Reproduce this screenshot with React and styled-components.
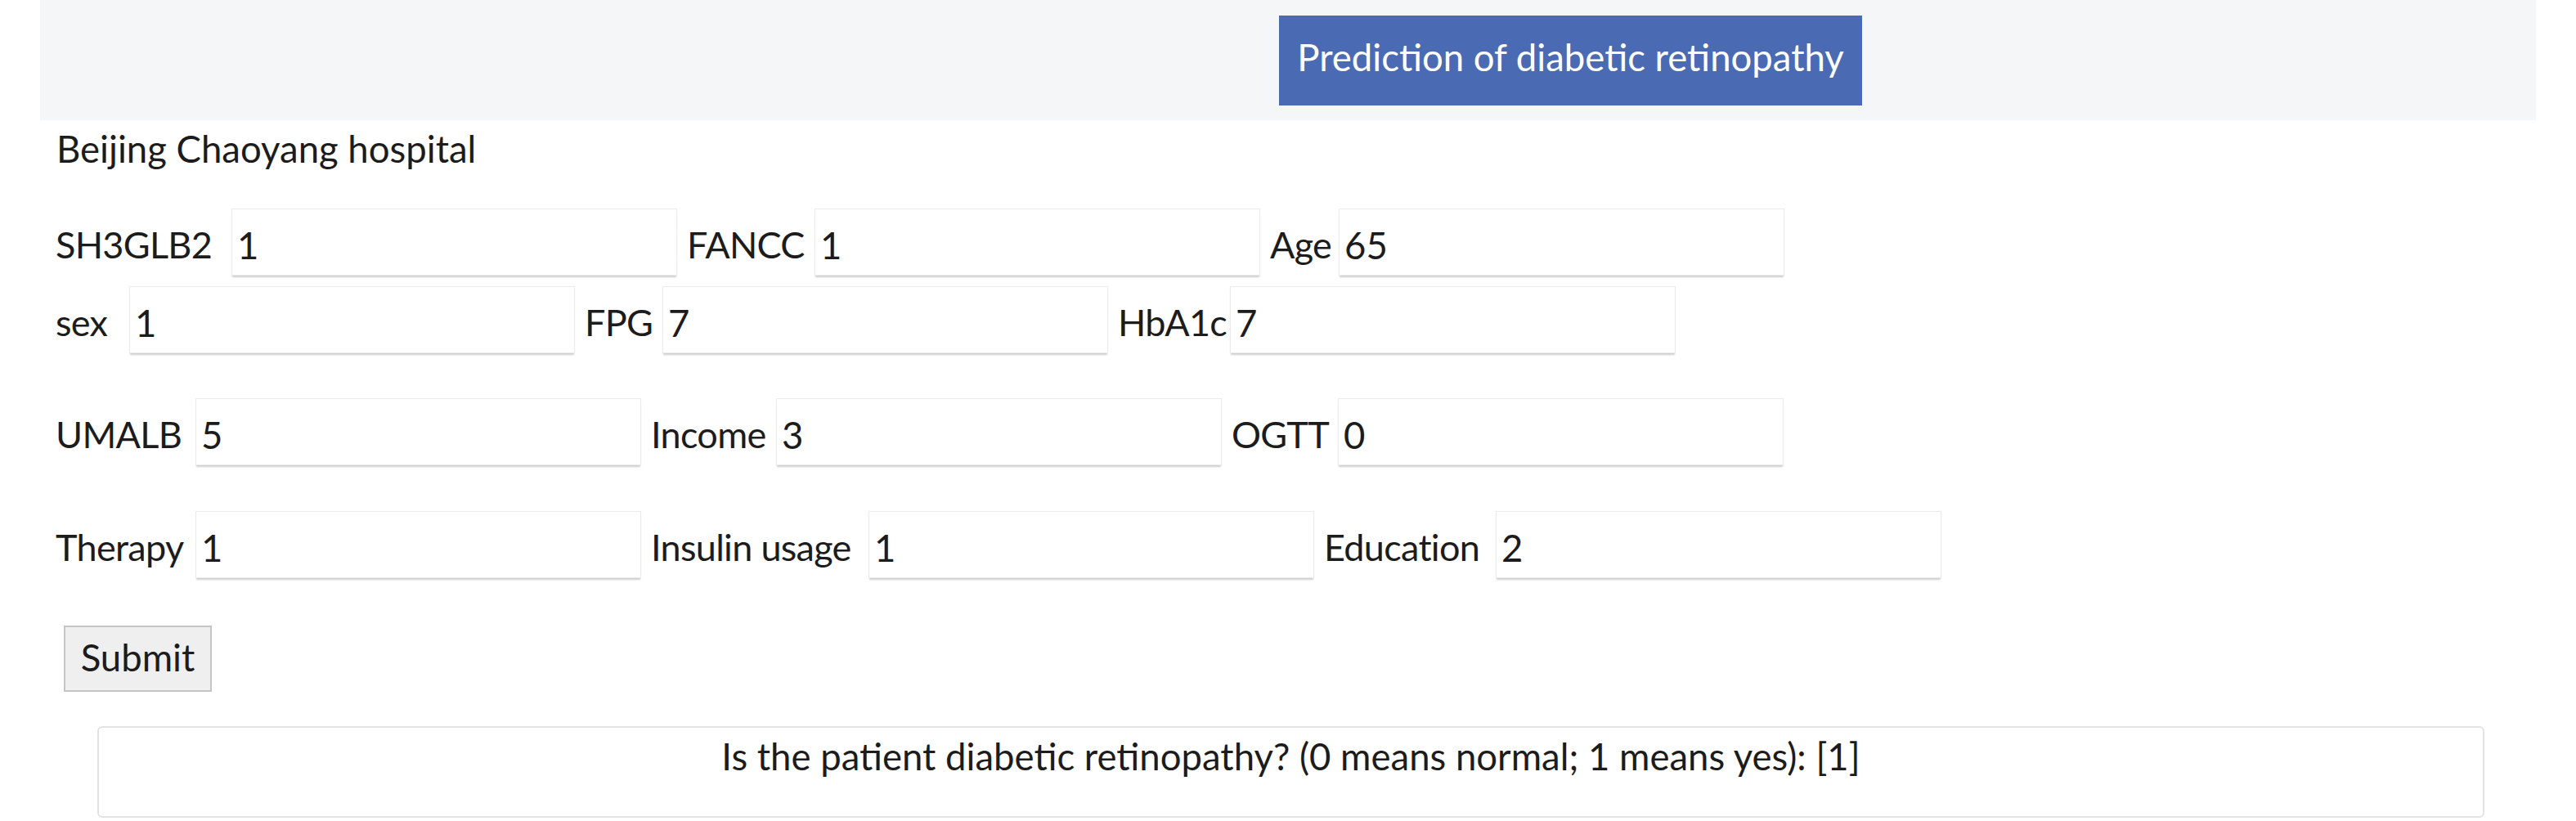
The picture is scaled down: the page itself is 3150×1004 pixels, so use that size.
import React from 'react';
import styled, { createGlobalStyle } from 'styled-components';

const GlobalStyle = createGlobalStyle`
  body {
    margin: 0;
    background: #ffffff;
    font-family: Lato, "Open Sans", "Liberation Sans", sans-serif;
    color: #1c1c1c;
  }
`;

const Page = styled.div`
  margin: 0 49px;
  font-size: 45.5px;
`;

const Header = styled.header`
  height: 147px;
  background: #f5f6f8;
  display: grid;
  grid-template-columns: 1fr 1fr;
  align-items: center;
`;

const Title = styled.div`
  grid-column: 2;
  justify-self: start;
  margin-left: -11px;
  width: 713px;
  height: 110px;
  box-sizing: border-box;
  padding-bottom: 8px;
  background: #4a6bb3;
  color: #ffffff;
  display: flex;
  align-items: center;
  justify-content: center;
`;

const Hospital = styled.div`
  margin: 10px 0 0 20px;
  line-height: 50px;
`;

const Form = styled.form`
  margin: 48px 0 0 19px;
  display: flex;
  flex-direction: column;
`;

const Row = styled.div`
  display: flex;
  align-items: center;
  gap: 12px;
  height: 82px;
  margin-top: ${p => p.top || 0}px;
`;

const Field = styled.label`
  display: flex;
  align-items: center;
`;

const Label = styled.span`
  width: ${p => p.w}px;
  white-space: nowrap;
  padding-top: 6px;
  font-size: 45px;
  letter-spacing: -0.7px;
`;

const Input = styled.input`
  width: 545px;
  height: 82px;
  box-sizing: border-box;
  border: 1px solid #ebebeb;
  box-shadow: 0 3px 2px -1px rgba(0, 0, 0, 0.2);
  background: #ffffff;
  padding: 6px 6px 0;
  font: inherit;
  color: #1c1c1c;
  outline: none;
`;

const SubmitButton = styled.button`
  align-self: flex-start;
  margin: 58px 0 0 10px;
  width: 181px;
  height: 81px;
  box-sizing: border-box;
  background: #efefef;
  border: 2px solid #c4c4c4;
  font: inherit;
  color: #1c1c1c;
  padding: 0 0 4px;
`;

const Result = styled.div`
  margin: 42px 63px 0 70px;
  height: 112px;
  box-sizing: border-box;
  border: 2px solid #e3e3e3;
  border-radius: 6px;
  text-align: center;
  padding-top: 10px;
  line-height: 50px;
`;

const rows = [
  {
    top: 0,
    fields: [
      { label: 'SH3GLB2', value: '1', w: 215 },
      { label: 'FANCC', value: '1', w: 156 },
      { label: 'Age', value: '65', w: 84 },
    ],
  },
  {
    top: 13,
    fields: [
      { label: 'sex', value: '1', w: 90 },
      { label: 'FPG', value: '7', w: 95 },
      { label: 'HbA1c', value: '7', w: 137 },
    ],
  },
  {
    top: 55,
    fields: [
      { label: 'UMALB', value: '5', w: 171 },
      { label: 'Income', value: '3', w: 153 },
      { label: 'OGTT', value: '0', w: 130 },
    ],
  },
  {
    top: 56,
    fields: [
      { label: 'Therapy', value: '1', w: 171 },
      { label: 'Insulin usage', value: '1', w: 266 },
      { label: 'Education', value: '2', w: 210 },
    ],
  },
];

function App() {
  return (
    <Page>
      <GlobalStyle />
      <Header>
        <Title>Prediction of diabetic retinopathy</Title>
      </Header>
      <Hospital>Beijing Chaoyang hospital</Hospital>
      <Form onSubmit={e => e.preventDefault()}>
        {rows.map((row, i) => (
          <Row key={i} top={row.top}>
            {row.fields.map(f => (
              <Field key={f.label}>
                <Label w={f.w}>{f.label}</Label>
                <Input type="text" defaultValue={f.value} />
              </Field>
            ))}
          </Row>
        ))}
        <SubmitButton type="submit">Submit</SubmitButton>
      </Form>
      <Result>Is the patient diabetic retinopathy? (0 means normal; 1 means yes): [1]</Result>
    </Page>
  );
}

export default App;
